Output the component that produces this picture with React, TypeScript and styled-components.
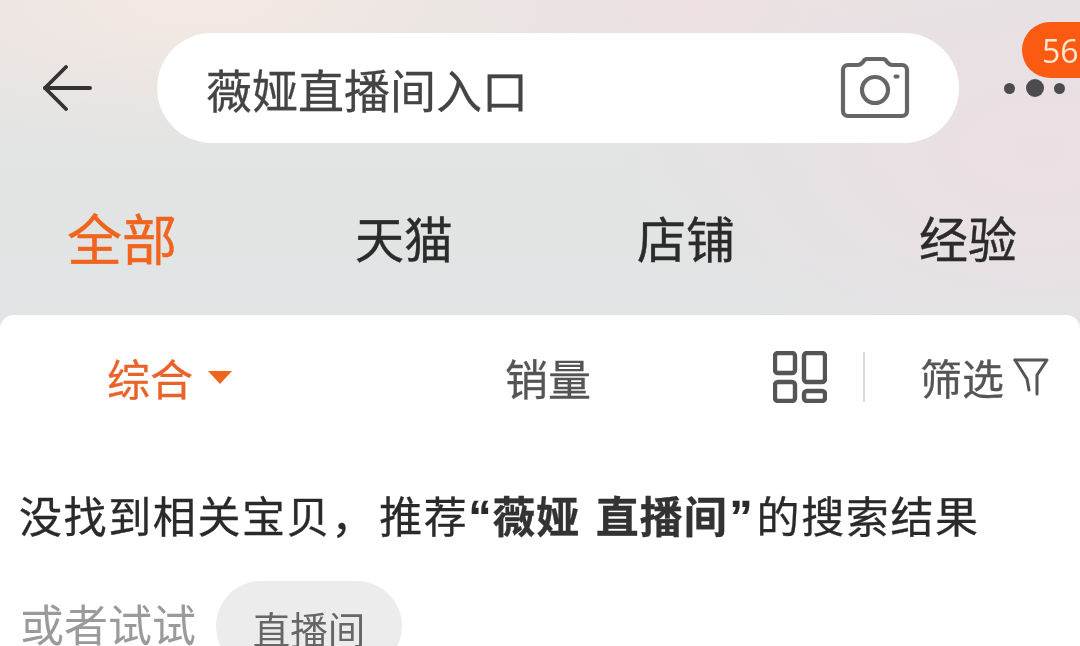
import React from 'react'
import styled, { createGlobalStyle } from 'styled-components'

const GlobalStyle = createGlobalStyle`
  html, body { margin: 0; padding: 0; }
  body {
    width: 1080px;
    height: 646px;
    overflow: hidden;
    font-family: "Noto Sans CJK SC", "Liberation Sans", sans-serif;
  }
`

const Page = styled.div`
  width: 1080px;
  height: 646px;
  overflow: hidden;
  display: flex;
  flex-direction: column;
  filter: blur(0.6px);
  background:
    radial-gradient(ellipse 430px 150px at 200px 0px, #f5e9e3 0%, rgba(245, 233, 227, 0) 100%),
    radial-gradient(ellipse 240px 130px at 690px 0px, #eee0e3 0%, rgba(238, 224, 227, 0) 100%),
    radial-gradient(ellipse 420px 260px at 1040px 150px, #ecdfe4 0%, rgba(236, 223, 228, 0) 100%),
    linear-gradient(180deg, #e4e3e2 0%, #e0e5e5 60%, #e3e3e6 100%);
`

const SearchRow = styled.div`
  height: 176px;
  flex-shrink: 0;
  display: flex;
  align-items: center;
  padding-left: 42px;
  box-sizing: border-box;
`

const BackButton = styled.div`
  width: 115px;
  height: 50px;
  flex-shrink: 0;
  display: flex;
  align-items: center;
`

const SearchBox = styled.div`
  width: 802px;
  height: 110px;
  border-radius: 55px;
  background: #fff;
  display: flex;
  align-items: center;
  justify-content: space-between;
  padding: 0 49px 0 49px;
  box-sizing: border-box;
  font-size: 46px;
  color: #444;
  line-height: 1;
  -webkit-text-stroke: 0.3px #444;
`

const More = styled.div`
  position: relative;
  margin-left: 45px;
  width: 60px;
  height: 20px;
  display: flex;
  align-items: center;
  gap: 10.5px;
`

const Dot = styled.span<{ $size: number }>`
  width: ${p => p.$size}px;
  height: ${p => p.$size}px;
  flex-shrink: 0;
  border-radius: 50%;
  background: #4b4b50;
`

const Badge = styled.div`
  position: absolute;
  left: 18px;
  top: -56px;
  width: 70px;
  height: 56px;
  border-radius: 28px 0 0 28px;
  background: #fa5a12;
  color: #fde6d2;
  font-family: "Open Sans", "Liberation Sans", sans-serif;
  font-size: 32px;
  line-height: 58px;
  padding-left: 20px;
  box-sizing: border-box;
`

const Tabs = styled.div`
  height: 139px;
  flex-shrink: 0;
  margin-left: -19px;
  display: grid;
  grid-template-columns: repeat(4, 282px);
  align-items: start;
  justify-items: center;
`

const Tab = styled.div<{ $active?: boolean }>`
  font-size: ${p => (p.$active ? 55 : 49)}px;
  line-height: 1;
  margin-top: ${p => (p.$active ? 33 : 36)}px;
  color: ${p => (p.$active ? '#f0641e' : '#2b2b2b')};
  -webkit-text-stroke: 0.4px ${p => (p.$active ? '#f0641e' : '#2b2b2b')};
`

const Panel = styled.div`
  flex: 1;
  background: #fff;
  border-radius: 14px 14px 0 0;
  padding-top: 38px;
  box-sizing: border-box;
`

const SortRow = styled.div`
  height: 48px;
  display: flex;
  align-items: center;
  padding-left: 107px;
`

const SortItem = styled.div<{ $active?: boolean; $width: number }>`
  width: ${p => p.$width}px;
  flex-shrink: 0;
  display: flex;
  align-items: center;
  font-size: 43px;
  line-height: 1;
  color: ${p => (p.$active ? '#e8632a' : '#555')};
  -webkit-text-stroke: 0.3px ${p => (p.$active ? '#e8632a' : '#555')};
`

const Caret = styled.span`
  margin-left: 15px;
  width: 0;
  height: 0;
  border-left: 12px solid transparent;
  border-right: 12px solid transparent;
  border-top: 13px solid #f0641e;
`

const Divider = styled.div`
  width: 2px;
  height: 50px;
  background: #d9d9d9;
  margin: 0 55px 0 36px;
  flex-shrink: 0;
`

const FilterLabel = styled.div`
  display: flex;
  align-items: center;
  gap: 9px;
  font-size: 42px;
  line-height: 1;
  color: #555;
  -webkit-text-stroke: 0.3px #555;
`

const Notice = styled.div`
  margin-top: 89px;
  margin-left: 19px;
  font-size: 43px;
  letter-spacing: 1.6px;
  line-height: 48px;
  white-space: nowrap;
  color: #2a2a2a;
  -webkit-text-stroke: 0.3px #2a2a2a;

  b {
    font-weight: 700;
    letter-spacing: 0.9px;
    word-spacing: 5px;
    color: #333;
  }
`

const Comma = styled.span`
  letter-spacing: 5px;
`

const Quote = styled.span<{ $closing?: boolean }>`
  font-family: "Liberation Sans", sans-serif;
  font-weight: 700;
  font-size: 46px;
  letter-spacing: ${p => (p.$closing ? 4 : 1)}px;
  margin-left: ${p => (p.$closing ? 2 : 0)}px;
`

const TryRow = styled.div`
  margin-top: 40px;
  margin-left: 20px;
  display: flex;
  align-items: flex-start;
`

const TryLabel = styled.div`
  font-size: 44px;
  line-height: 1;
  margin-top: 20px;
  color: #9a9a9a;
`

const Chip = styled.div`
  margin-left: 20px;
  width: 186px;
  height: 90px;
  border-radius: 45px;
  background: #ececec;
  color: #666;
  font-size: 37.5px;
  line-height: 1;
  padding-top: 28px;
  box-sizing: border-box;
  text-align: center;
`

const tabs = ['全部', '天猫', '店铺', '经验']

const App = () => {
  return (
    <Page>
      <GlobalStyle />
      <SearchRow>
        <BackButton>
          <svg width="50" height="46" viewBox="0 0 50 46" fill="none" stroke="#333" strokeWidth="3.8" strokeLinecap="round" strokeLinejoin="round">
            <path d="M24 2 3 23l21 21" />
            <path d="M3 23h45" />
          </svg>
        </BackButton>
        <SearchBox>
          <span>薇娅直播间入口</span>
          <svg width="70" height="62" viewBox="0 0 70 62" fill="none" stroke="#666" strokeWidth="4.2" strokeLinejoin="round">
            <path d="M8 8h10c2 0 3-1 4-2l1-1c1-2 2-3 4-3h16c2 0 3 1 4 3l1 1c1 1 2 2 4 2h10c3 0 5 2 5 5v41c0 3-2 5-5 5H8c-3 0-5-2-5-5V13c0-3 2-5 5-5Z" />
            <circle cx="35" cy="33" r="13" />
            <rect x="54" y="18" width="5" height="3" rx="1" fill="#666" strokeWidth="1" />
          </svg>
        </SearchBox>
        <More>
          <Dot $size={11} />
          <Dot $size={18} />
          <Dot $size={11} />
          <Badge>56</Badge>
        </More>
      </SearchRow>
      <Tabs>
        {tabs.map((t, i) => (
          <Tab key={t} $active={i === 0}>{t}</Tab>
        ))}
      </Tabs>
      <Panel>
        <SortRow>
          <SortItem $active $width={398}>
            综合<Caret />
          </SortItem>
          <SortItem $width={268}>销量</SortItem>
          <svg width="54" height="52" viewBox="0 0 54 52" fill="none" stroke="#555" strokeWidth="4.4">
            <rect x="2" y="2" width="20" height="20" rx="3" />
            <rect x="31" y="2" width="21" height="29" rx="3" />
            <rect x="2" y="31" width="20" height="19" rx="3" />
            <rect x="31" y="40" width="21" height="10" rx="3" />
          </svg>
          <Divider />
          <FilterLabel>
            筛选
            <svg width="36" height="38" viewBox="0 0 36 38" fill="none" stroke="#555" strokeWidth="3" strokeLinecap="round" strokeLinejoin="round">
              <path d="M2 2h32L24 17v19" />
              <path d="M2 2l12 19 2 11" />
            </svg>
          </FilterLabel>
        </SortRow>
        <Notice>
          没找到相关宝贝<Comma>，</Comma>推荐<Quote>“</Quote><b>薇娅 直播间</b><Quote $closing>”</Quote>的搜索结果
        </Notice>
        <TryRow>
          <TryLabel>或者试试</TryLabel>
          <Chip>直播间</Chip>
        </TryRow>
      </Panel>
    </Page>
  )
}

export default App
